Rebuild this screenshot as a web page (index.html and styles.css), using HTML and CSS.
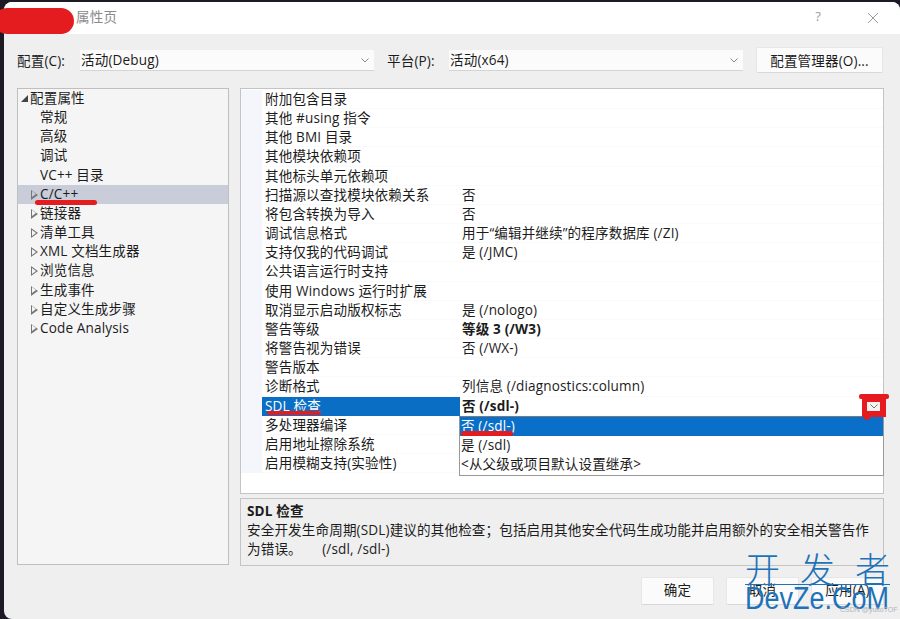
FILE: index.html
```html
<!DOCTYPE html>
<html lang="zh">
<head>
<meta charset="utf-8">
<title>属性页</title>
<link rel="stylesheet" href="styles.css">
</head>
<body>
<div class="dialog">
  <header class="titlebar">
    <span class="title">属性页</span>
    <span class="help">?</span>
    <svg class="close" width="12" height="12" viewBox="0 0 12 12"><path d="M1 1l10 10M11 1L1 11" stroke="#9a9a9a" fill="none"/></svg>
  </header>
  <div class="toolbar">
    <span class="label label-c">配置(C):</span>
    <div class="select sel-c"><span>活动(Debug)</span><svg class="chev" width="8" height="5" viewBox="0 0 8 5"><path d="M.5.5L4 4 7.5.5" stroke="#888" fill="none"/></svg></div>
    <span class="label label-p">平台(P):</span>
    <div class="select sel-p"><span>活动(x64)</span><svg class="chev" width="8" height="5" viewBox="0 0 8 5"><path d="M.5.5L4 4 7.5.5" stroke="#888" fill="none"/></svg></div>
    <div class="btn manager"><span>配置管理器(O)...</span></div>
  </div>
  <div class="main">
    <nav class="tree">
      <div class="node root"><i class="tri open"></i>配置属性</div>
      <div class="node leaf">常规</div>
      <div class="node leaf">高级</div>
      <div class="node leaf">调试</div>
      <div class="node leaf">VC++ 目录</div>
      <div class="node sel"><i class="tri"></i>C/C++</div>
      <div class="node"><i class="tri"></i>链接器</div>
      <div class="node"><i class="tri"></i>清单工具</div>
      <div class="node"><i class="tri"></i>XML 文档生成器</div>
      <div class="node"><i class="tri"></i>浏览信息</div>
      <div class="node"><i class="tri"></i>生成事件</div>
      <div class="node"><i class="tri"></i>自定义生成步骤</div>
      <div class="node"><i class="tri"></i>Code Analysis</div>
    </nav>
    <div class="right">
      <div class="grid">
        <div class="rows">
          <div class="row"><span class="k">附加包含目录</span><span class="v"></span></div>
          <div class="row"><span class="k">其他 #using 指令</span><span class="v"></span></div>
          <div class="row"><span class="k">其他 BMI 目录</span><span class="v"></span></div>
          <div class="row"><span class="k">其他模块依赖项</span><span class="v"></span></div>
          <div class="row"><span class="k">其他标头单元依赖项</span><span class="v"></span></div>
          <div class="row"><span class="k">扫描源以查找模块依赖关系</span><span class="v">否</span></div>
          <div class="row"><span class="k">将包含转换为导入</span><span class="v">否</span></div>
          <div class="row"><span class="k">调试信息格式</span><span class="v">用于“编辑并继续”的程序数据库 (/ZI)</span></div>
          <div class="row"><span class="k">支持仅我的代码调试</span><span class="v">是 (/JMC)</span></div>
          <div class="row"><span class="k">公共语言运行时支持</span><span class="v"></span></div>
          <div class="row"><span class="k">使用 Windows 运行时扩展</span><span class="v"></span></div>
          <div class="row"><span class="k">取消显示启动版权标志</span><span class="v">是 (/nologo)</span></div>
          <div class="row"><span class="k">警告等级</span><span class="v bold">等级 3 (/W3)</span></div>
          <div class="row"><span class="k">将警告视为错误</span><span class="v">否 (/WX-)</span></div>
          <div class="row"><span class="k">警告版本</span><span class="v"></span></div>
          <div class="row"><span class="k">诊断格式</span><span class="v">列信息 (/diagnostics:column)</span></div>
          <div class="row active"><span class="k">SDL 检查</span><span class="v bold">否 (/sdl-)</span></div>
          <div class="row"><span class="k">多处理器编译</span><span class="v"></span></div>
          <div class="row"><span class="k">启用地址擦除系统</span><span class="v"></span></div>
          <div class="row"><span class="k">启用模糊支持(实验性)</span><span class="v"></span></div>
        </div>
      </div>
      <div class="desc">
        <div class="desc-title">SDL 检查</div>
        <div class="desc-body">安全开发生命周期(SDL)建议的其他检查；包括启用其他安全代码生成功能并启用额外的安全相关警告作为错误。 &nbsp; &nbsp; <span class="flags">(/sdl, /sdl-)</span></div>
      </div>
    </div>
  </div>
  <footer class="actions">
    <div class="btn">确定</div>
    <div class="btn">取消</div>
    <div class="btn">应用(A)</div>
  </footer>
</div>

<div class="dropdown">
  <div class="opt on">否 (/sdl-)</div>
  <div class="opt">是 (/sdl)</div>
  <div class="opt">&lt;从父级或项目默认设置继承&gt;</div>
</div>

<div class="mark blob"></div>
<div class="mark line line-tree"></div>
<div class="mark line line-key"></div>
<div class="mark line line-opt"></div>
<div class="mark redbox"><span class="whitebox"><svg width="8" height="5" viewBox="0 0 8 5"><path d="M.5.5L4 4 7.5.5" stroke="#777" fill="none"/></svg></span></div>

<div class="watermark">
  <div class="wm-cn"><span>开</span><span>发</span><span>者</span></div>
  <div class="wm-en">DevZe.CoM</div>
</div>
<div class="csdn">CSDN @yuitoTOF</div>
</body>
</html>
```
FILE: styles.css
```css
* { box-sizing: border-box; }
html, body { margin: 0; height: 100%; }
body {
  width: 900px; height: 619px; overflow: hidden; position: relative;
  background: #1d1a26;
  font: 13.55px/19.16px "Open Sans", "Noto Sans CJK SC", sans-serif;
  letter-spacing: .15px;
  color: #1c1c1c;
}
.dialog {
  margin: 2px 0 0 4px; height: 617px; width: 896px;
  background: #efefef; border-radius: 8px 8px 0 8px; overflow: hidden;
  display: flex; flex-direction: column;
}
.titlebar {
  height: 32px; flex: none; background: #fff; display: flex; align-items: center;
  padding-left: 72px; padding-right: 21px;
}
.title { color: #8a8a8a; margin-top: -1px; flex: 1; }
.help { color: #9a9a9a; font-size: 13px; margin-right: 46px; margin-top: -2px; }
.close { margin-top: -1px; }
.toolbar {
  display: flex; align-items: center; height: 26px; margin-top: 13px; flex: none;
  padding-left: 13px;
}
.label { flex: none; padding-top: 3px; }
.label-c { width: 63px; }
.label-p { width: 62px; margin-left: 13px; }
.select {
  width: 294px; height: 21px; background: #fbfbfb; border-bottom: 1px solid #d4d4d4;
  display: flex; align-items: center; justify-content: space-between;
  padding: 0 5px 0 1px; flex: none;
}
.select span, .manager span { padding-top: 3px; }
.select .chev { margin-top: 2px; }
.btn {
  background: #fbfbfb; border: 1px solid #e6e6e6; border-bottom-color: #d8d8d8;
  display: flex; align-items: center; justify-content: center; border-radius: 2px;
}
.manager { width: 127px; height: 26px; margin-left: 13px; flex: none; }
.main {
  display: flex; gap: 11px; margin-top: 15px; padding-left: 13px; flex: none; height: 478px;
}
.tree {
  width: 212px; height: 477px; background: #f5f5f6; border: 1px solid #bfbfbf; flex: none;
}
.node { height: 19.16px; line-height: 18.6px; padding-left: 22px; position: relative; white-space: nowrap; }
.node.root { padding-left: 12px; }
.node.sel { background: #c9ccd9; }
.tri {
  position: absolute; left: 13px; top: 5px; width: 0; height: 0;
  border-left: 7px solid #777; border-top: 5px solid transparent; border-bottom: 5px solid transparent;
}
.tri::after {
  content: ""; position: absolute; left: -6px; top: -3.5px; width: 0; height: 0;
  border-left: 4.5px solid #f5f5f6; border-top: 3.5px solid transparent; border-bottom: 3.5px solid transparent;
}
.sel .tri::after { border-left-color: #c9ccd9; }
.tri.open {
  left: 3px; top: 6px; border: 0; border-bottom: 7px solid #444; border-left: 7px solid transparent;
}
.tri.open::after { display: none; }
.right { width: 644px; flex: none; display: flex; flex-direction: column; gap: 4px; }
.grid {
  height: 406px; background: #fff; border: 1px solid #c4c4c4; padding-top: 1px; flex: none;
}
.rows { background: #f4f6fc; }
.row {
  display: grid; grid-template-columns: 198px 1fr; height: 19.16px; line-height: 18.8px;
  margin-left: 21px; white-space: nowrap; background: #fff;
  box-shadow: inset 0 -1px 0 #fafafa;
}
.k { padding-left: 3px; }
.v { padding-left: 2px; }
.bold { font-weight: 700; }
.active .k { background: #0a6fc4; color: #fff; }
.desc {
  height: 68px; border: 1px solid #c4c4c4; padding: 3px 6px; flex: none;
}
.desc-title { font-weight: 700; }
.desc-body { line-height: 18.5px; width: 626px; }
.flags { margin-left: 2px; }
.actions {
  display: flex; gap: 12px; justify-content: flex-end; padding-right: 16px; margin-top: 11px; flex: none;
}
.actions .btn { width: 73px; height: 28px; }
.dropdown {
  position: absolute; left: 459px; top: 416px; width: 425px; height: 60px;
  background: #fff; border: 1px solid #999; border-top-color: #7a7a7a;
}
.opt { height: 18.8px; padding-left: 1px; line-height: 18px; }
.opt.on { background: #0a6fc9; color: #fff; }
.mark { position: absolute; background: #e51c1f; }
.blob { left: -6px; top: 8px; width: 80px; height: 26px; border-radius: 13px; }
.line { height: 5px; border-radius: 3px; }
.line-tree { left: 35px; top: 200px; width: 62px; }
.line-key { left: 267px; top: 411px; width: 54px; height: 4px; }
.line-opt { left: 461px; top: 431px; width: 52px; }
.redbox {
  left: 862px; top: 396px; width: 24px; height: 21px;
  display: flex; justify-content: center; padding-top: 6px; padding-right: 1px;
}
.redbox::before {
  content: ""; position: absolute; left: -3px; top: -2px; width: 30px; height: 5px;
  background: #e51c1f; border-radius: 2px;
}
.redbox::after {
  content: ""; position: absolute; left: 2px; top: 20px; width: 6px; height: 4px;
  background: #e51c1f; border-radius: 0 0 3px 3px;
}
.whitebox {
  width: 13px; height: 9px; background: #f6f2f2; display: flex; align-items: center; justify-content: center;
}
.watermark {
  position: absolute; left: 745px; top: 551px; width: 145px; color: #1e72b8; letter-spacing: 0;
}
.wm-cn {
  font: 300 35px/33px "Noto Sans CJK SC", sans-serif;
  display: flex; justify-content: space-between; white-space: nowrap;
  border-bottom: 1px solid #1e72b8; height: 34px;
}
.wm-en {
  font: 400 31px/27px "Liberation Sans", sans-serif; white-space: nowrap;
  transform: scaleX(.87); transform-origin: 0 50%; width: 165px;
}
.csdn {
  position: absolute; left: 840px; top: 605px; font: 7px/10px "Liberation Sans", sans-serif; letter-spacing: 0; color: #b4b4b4; white-space: nowrap;
}
```
